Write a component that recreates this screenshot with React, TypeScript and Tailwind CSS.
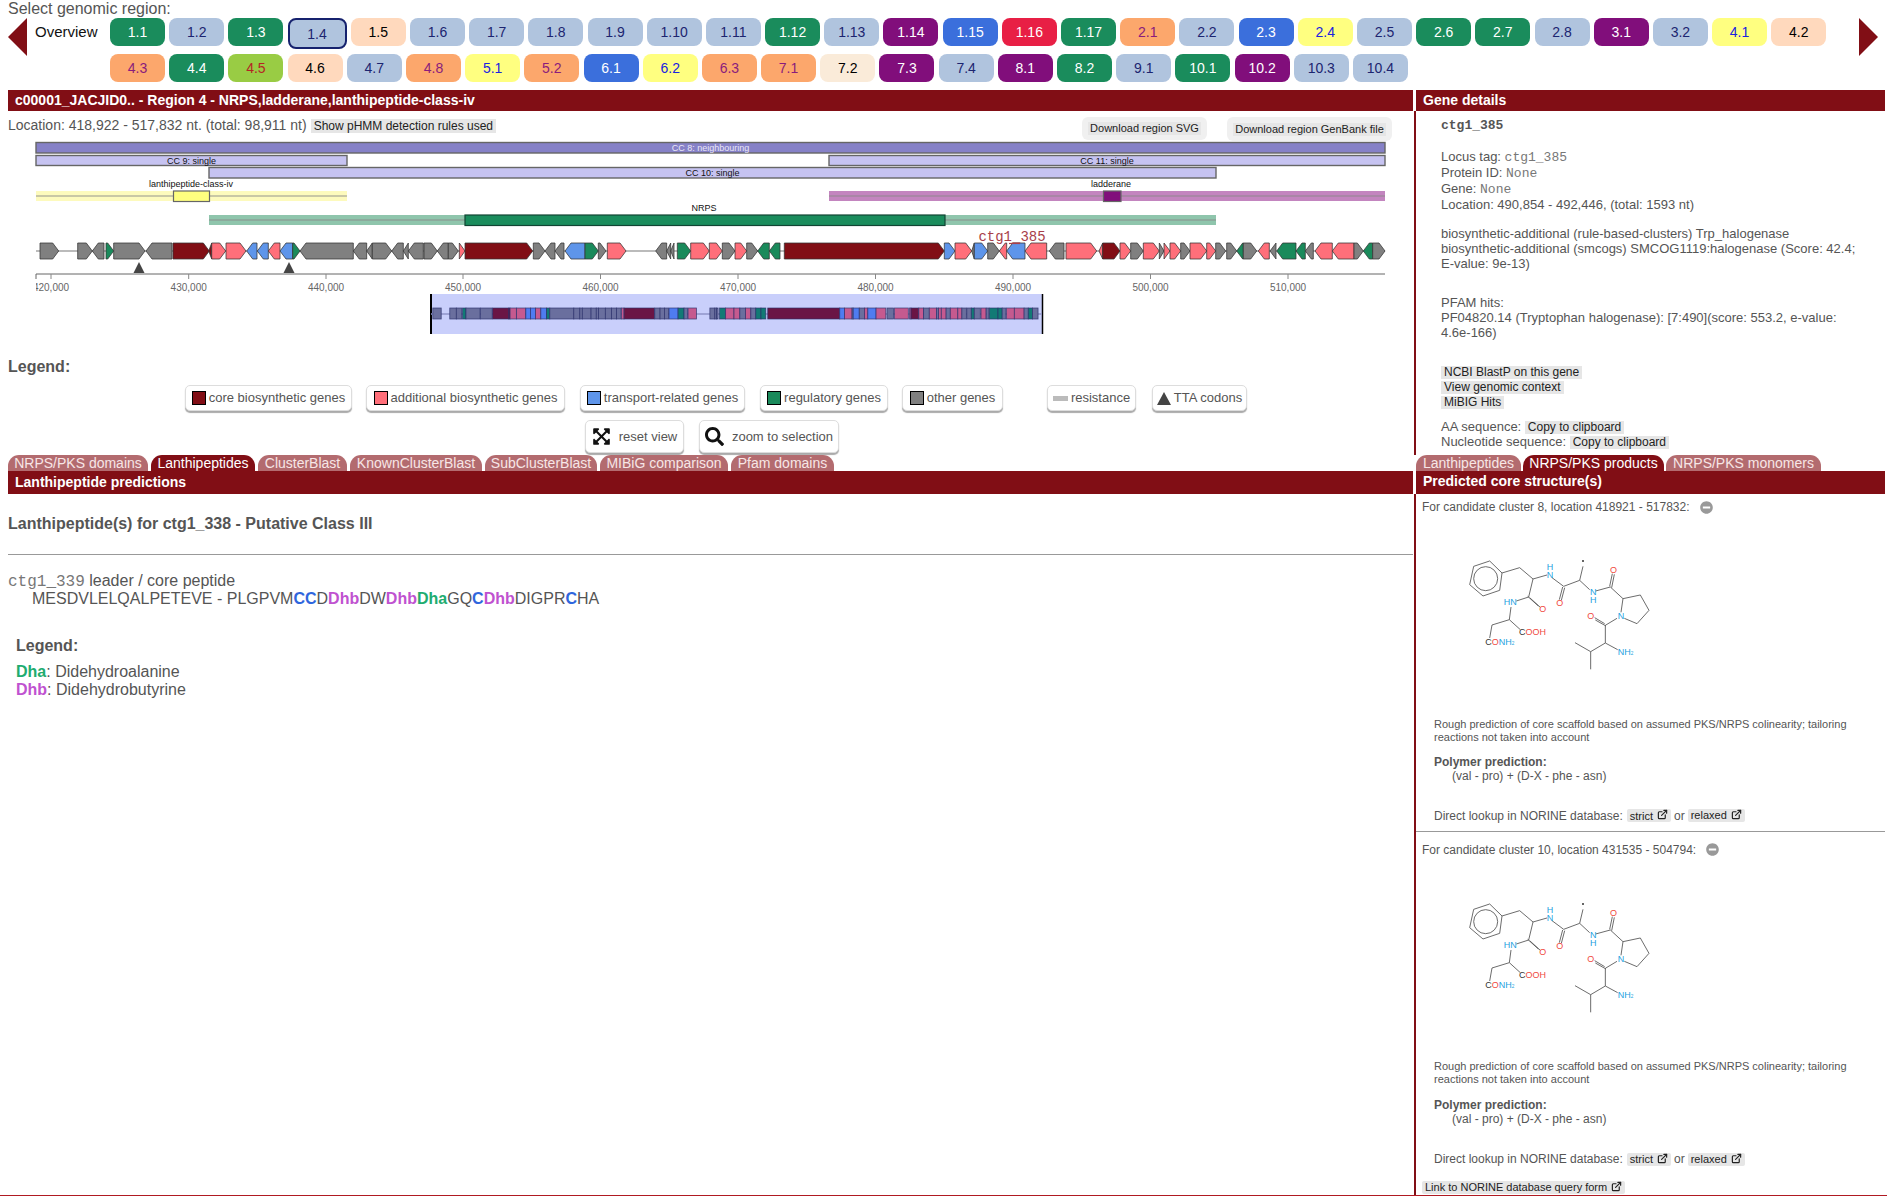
import type { ReactNode } from "react";
import { ExternalLink } from "lucide-react";
import { FaExpandArrowsAlt, FaMinusCircle, FaSearch } from "react-icons/fa";

const RED = "#810e15";

const btnStyles: Record<string, string> = {
  g: "bg-[#1a8c5c] text-white",
  l: "bg-[#b0c4de] text-[#1c2570]",
  p: "bg-[#ffd9bd] text-black",
  u: "bg-[#810e7b] text-white",
  b: "bg-[#3b6fdc] text-white",
  r: "bg-[#e81f45] text-white",
  o: "bg-[#fca76c] text-[#8a1c7c]",
  y: "bg-[#ffff80] text-[#1a22e0]",
  m: "bg-[#99cc44] text-[#b52424]",
  c: "bg-[#faebd9] text-black",
};

const regions: [string, string][] = [
  ["1.1", "g"], ["1.2", "l"], ["1.3", "g"], ["1.4", "l"], ["1.5", "p"], ["1.6", "l"], ["1.7", "l"], ["1.8", "l"],
  ["1.9", "l"], ["1.10", "l"], ["1.11", "l"], ["1.12", "g"], ["1.13", "l"], ["1.14", "u"], ["1.15", "b"], ["1.16", "r"],
  ["1.17", "g"], ["2.1", "o"], ["2.2", "l"], ["2.3", "b"], ["2.4", "y"], ["2.5", "l"], ["2.6", "g"], ["2.7", "g"],
  ["2.8", "l"], ["3.1", "u"], ["3.2", "l"], ["4.1", "y"], ["4.2", "p"],
  ["4.3", "o"], ["4.4", "g"], ["4.5", "m"], ["4.6", "p"], ["4.7", "l"], ["4.8", "o"], ["5.1", "y"], ["5.2", "o"],
  ["6.1", "b"], ["6.2", "y"], ["6.3", "o"], ["7.1", "o"], ["7.2", "c"], ["7.3", "u"], ["7.4", "l"], ["8.1", "u"],
  ["8.2", "g"], ["9.1", "l"], ["10.1", "g"], ["10.2", "u"], ["10.3", "l"], ["10.4", "l"],
];

const geneFill: Record<string, string> = {
  g: "#808080",
  c: "#810e15",
  a: "#ff6f7a",
  t: "#5e95ea",
  r: "#1a8a5b",
};

const miniFill: Record<string, string> = {
  g: "#6a6f9e",
  c: "#6a1545",
  a: "#c55a8f",
  t: "#4f7cf0",
  r: "#127a75",
};

// start, end, direction (1 forward, 0 reverse), kind
const genes: [number, number, number, string][] = [
  [40, 58.7, 1, "g"], [77.7, 92.3, 1, "g"], [92.3, 104, 0, "g"], [106, 113.7, 1, "r"], [113.7, 145, 1, "g"],
  [146, 172, 0, "g"], [173, 209.3, 1, "c"], [208.7, 211.7, 0, "c"], [211.7, 225.7, 1, "a"], [226, 246, 1, "a"],
  [246.7, 257, 0, "t"], [257.3, 268.3, 0, "t"], [268.3, 280, 0, "a"], [280, 292.7, 0, "t"], [292.7, 300, 1, "r"],
  [300, 353.3, 0, "g"], [353.3, 366.7, 0, "g"], [366.7, 372.3, 0, "g"], [372.3, 391.7, 1, "g"], [391.7, 403.3, 0, "g"],
  [403.3, 408.3, 0, "g"], [408.3, 423.3, 0, "g"], [424, 437.3, 1, "g"], [437.3, 448.3, 0, "g"], [448.3, 458.3, 1, "g"],
  [459.3, 465, 1, "a"], [465, 532.7, 1, "c"], [533.3, 545, 1, "g"], [545, 555, 0, "g"], [555, 564, 0, "g"],
  [565, 585, 0, "t"], [585, 598.3, 1, "r"], [598.3, 606, 1, "g"], [607.3, 626, 1, "a"], [655.7, 666.7, 0, "g"],
  [666.7, 670.7, 0, "g"], [670.7, 674, 0, "g"], [677.3, 690.7, 1, "r"], [690.7, 709.3, 1, "a"], [709.3, 722.3, 1, "a"],
  [722.3, 735, 1, "g"], [735, 746.7, 1, "a"], [746.7, 757.7, 1, "g"], [757.7, 769.3, 0, "r"], [769.3, 780, 0, "r"],
  [784.3, 944.3, 1, "c"], [944.3, 955, 1, "t"], [955, 971.7, 1, "a"], [971.7, 974.3, 0, "g"], [974.3, 987.7, 1, "t"],
  [987.7, 999.3, 1, "g"], [999.3, 1006.7, 0, "a"], [1006.7, 1025, 0, "t"], [1025, 1046.7, 0, "a"], [1049.3, 1064, 0, "g"],
  [1066, 1096.7, 1, "a"], [1099, 1102.7, 0, "a"], [1102.7, 1120, 1, "c"], [1120, 1130.7, 1, "a"], [1130.7, 1143.3, 1, "g"],
  [1143.3, 1159.3, 1, "a"], [1159.3, 1164, 1, "g"], [1164, 1170, 1, "a"], [1170, 1180.7, 1, "a"], [1180.7, 1190, 1, "g"],
  [1190, 1206.7, 1, "a"], [1206.7, 1215.7, 1, "a"], [1215.7, 1225.7, 1, "g"], [1226.7, 1236.7, 1, "g"], [1236.7, 1243.3, 0, "r"],
  [1243.3, 1256.7, 1, "g"], [1258.3, 1269.3, 0, "a"], [1270, 1276, 0, "g"], [1276.7, 1296, 0, "r"], [1296, 1305.3, 0, "r"],
  [1305.3, 1313.3, 0, "g"], [1315, 1332.3, 0, "a"], [1332.3, 1354, 0, "a"], [1354, 1363.3, 1, "g"], [1363.3, 1372.7, 0, "r"],
  [1372.7, 1385, 1, "g"],
];

const ticks = [
  [51, "420,000"], [188.7, "430,000"], [326, "440,000"], [463, "450,000"], [600.5, "460,000"], [738, "470,000"],
  [875.5, "480,000"], [1013, "490,000"], [1150.5, "500,000"], [1288, "510,000"],
] as const;

function genePoints(s: number, e: number, fwd: number) {
  const t = Math.min(6, e - s);
  if (fwd) return `${s},243 ${e - t},243 ${e},251 ${e - t},259 ${s},259`;
  return `${e},243 ${s + t},243 ${s},251 ${s + t},259 ${e},259`;
}

function CandidateBar({ x1, x2, y, h, fill, stroke, label, color = "#111" }: { x1: number; x2: number; y: number; h: number; fill: string; stroke: string; label: string; color?: string }) {
  return (
    <g>
      <rect x={x1} y={y} width={x2 - x1} height={h} fill={fill} stroke={stroke} strokeWidth="1.4" />
      <text x={(x1 + x2) / 2} y={y + h - 2} fontSize="9" textAnchor="middle" fill={color}>{label}</text>
    </g>
  );
}

function ProtoBar({ x1, x2, cx1, cx2, y, fill, core, label, labelX, coreStroke = "#666" }: { x1: number; x2: number; cx1: number; cx2: number; y: number; fill: string; core: string; label: string; labelX: number; coreStroke?: string }) {
  return (
    <g>
      <rect x={x1} y={y} width={x2 - x1} height="10" fill={fill} />
      <line x1={x1} x2={x2} y1={y + 5} y2={y + 5} stroke="#888" strokeOpacity="0.6" strokeWidth="1.5" />
      <rect x={cx1} y={y} width={cx2 - cx1} height="10.5" fill={core} stroke={coreStroke} strokeWidth="1.2" />
      <text x={labelX} y={y - 4} fontSize="9" textAnchor="middle" fill="#111">{label}</text>
    </g>
  );
}

function RegionView() {
  return (
    <svg viewBox="8 141 1405 199" width="1405" height="199" className="block">
      <defs>
        <clipPath id="axisClip">
          <rect x="36" y="270" width="1349" height="30" />
        </clipPath>
      </defs>
      <CandidateBar x1={36} x2={1385} y={142.5} h={10.5} fill="#8681c7" stroke="#666" label="CC 8: neighbouring" color="#e8e6f8" />
      <CandidateBar x1={36} x2={347} y={155.5} h={10} fill="#c6c3f1" stroke="#666" label="CC 9: single" />
      <CandidateBar x1={829} x2={1385} y={155.5} h={10} fill="#c6c3f1" stroke="#666" label="CC 11: single" />
      <CandidateBar x1={209} x2={1216} y={167.5} h={10.5} fill="#c6c3f1" stroke="#666" label="CC 10: single" />
      <ProtoBar x1={36} x2={347} cx1={173.5} cx2={209.5} y={191} fill="#fdfabd" core="#ffff7f" label="lanthipeptide-class-iv" labelX={191} />
      <ProtoBar x1={829} x2={1385} cx1={1103.5} cx2={1121} y={191} fill="#c385bf" core="#810e7b" label="ladderane" labelX={1111} />
      <ProtoBar x1={209} x2={1216} cx1={465} cx2={945} y={215} fill="#8fc5ac" core="#1a8c5c" coreStroke="#143" label="NRPS" labelX={704} />

      <line x1={36} x2={1385} y1={251} y2={251} stroke="#bbb" strokeWidth="2" />
      {genes.map(([s, e, d, k]) => (
        <polygon key={s} points={genePoints(s, e, d)} fill={geneFill[k]} stroke="#333" strokeOpacity="0.75" strokeWidth="1" />
      ))}
      <text x={1012} y={241} fontSize="14" textAnchor="middle" fill="#a8404a" fontFamily="'Liberation Mono', monospace">ctg1_385</text>
      <line x1={1009} x2={1020} y1={243.5} y2={243.5} stroke="#a8404a" strokeWidth="1.2" />

      <polygon points="139,262 133.5,273 144.5,273" fill="#444" />
      <polygon points="289,262 283.5,273 294.5,273" fill="#444" />

      <line x1={36} x2={1385} y1={274} y2={274} stroke="#666" strokeWidth="1" />
      <line x1={36} x2={36} y1={274} y2={279} stroke="#666" />
      {ticks.map(([x, label]) => (
        <g key={label}>
          <line x1={x} x2={x} y1={274} y2={279} stroke="#888" />
          <text x={x} y={291} fontSize="10" textAnchor="middle" fill="#666" clipPath="url(#axisClip)">{label}</text>
        </g>
      ))}

      <rect x={430} y={294} width={613} height={40} fill="#c9cffb" />
      <line x1={431} x2={431} y1={294} y2={334} stroke="#000" strokeWidth="2" />
      <line x1={1042.5} x2={1042.5} y1={294} y2={334} stroke="#000" strokeWidth="1.5" />
      <line x1={431} x2={1042} y1={314} y2={314} stroke="#8f94c8" strokeWidth="1.5" />
      {genes.map(([s, e, , k]) => (
        <rect key={s} x={431 + (s - 36) * 0.45} y={308} width={(e - s) * 0.45} height={11} fill={miniFill[k]} stroke="#2a2f6a" strokeOpacity="0.8" strokeWidth="0.8" />
      ))}
    </svg>
  );
}

function Molecule() {
  const bonds = [
    "M275 248L328 232L368 266L410 254", "M425 262L460 288L508 270L538 298", "M508 270L518 228", "M556 302L600 290L638 325L690 314L716 360L680 400L642 384",
    "M638 325L632 366", "M620 384L585 405L585 458L622 478", "M585 458L541 484L494 457", "M541 484L541 537",
    "M368 266L355 320L318 332", "M302 350L297 388L245 404L238 443", "M297 388L330 418",
    "M457 290L447 328", "M463 292L453 330", "M598 288L606 250", "M604 292L612 252", "M583 400L553 382", "M587 407L555 389", "M352 318L384 347", "M358 322L390 351",
  ];
  return (
    <svg viewBox="170 200 570 350" width="190" height="116.67" className="block">
      <polygon points="178,283 190,228 238,212 275,248 268,300 218,317" fill="none" stroke="#555" strokeWidth="2.6" />
      <circle cx="226" cy="265" r="36" fill="none" stroke="#555" strokeWidth="2.6" />
      {bonds.map((d) => (
        <path key={d} d={d} fill="none" stroke="#555" strokeWidth="2.6" />
      ))}
      <circle cx="518" cy="212" r="3" fill="#333" />
      <g fontSize="27" fill="#1da1e0">
        <text x="409" y="238">H</text>
        <text x="409" y="262">N</text>
        <text x="539" y="313">N</text>
        <text x="539" y="337">H</text>
        <text x="622" y="387">N</text>
        <text x="280" y="345">HN</text>
        <text x="622" y="494">NH<tspan fontSize="14">2</tspan></text>
      </g>
      <g fontSize="27" fill="#f04a3e">
        <text x="599" y="248">O</text>
        <text x="438" y="347">O</text>
        <text x="387" y="364">O</text>
        <text x="531" y="387">O</text>
      </g>
      <text x="326" y="433" fontSize="27" fill="#f04a3e"><tspan fill="#333">C</tspan>OOH</text>
      <text x="225" y="465" fontSize="27" fill="#1da1e0"><tspan fill="#333">C</tspan><tspan fill="#f04a3e">O</tspan>NH<tspan fontSize="14">2</tspan></text>
    </svg>
  );
}

function LinkChip({ label }: { label: string }) {
  return (
    <span className="inline-flex items-center h-[13px] px-[3px] bg-[#e6e6e6] rounded-[2px] text-[11px] text-[#222]">
      {label}
      <ExternalLink size={11} strokeWidth={2.6} className="ml-[4px] -mt-[2px] text-[#222]" />
    </span>
  );
}

function PredictionBlock({ label, top, polyMt }: { label: string; top: string; polyMt: string }) {
  return (
    <div className={top}>
      <div className="flex items-center h-[14px] ml-[6px] text-[12px] leading-[14px]">
        {label}
        <FaMinusCircle size={13} className="ml-[10px] text-[#999]" />
      </div>
      <div className="mt-[43px] ml-[51px]">
        <Molecule />
      </div>
      <p className="mt-[44px] ml-[18px] w-[430px] text-[11px] leading-[13px]">
        Rough prediction of core scaffold based on assumed PKS/NRPS colinearity; tailoring reactions not taken into account
      </p>
      <div className={`${polyMt} ml-[18px] text-[12px] leading-[14px] font-bold`}>Polymer prediction:</div>
      <div className="ml-[36px] text-[12px] leading-[14px]">(val - pro) + (D-X - phe - asn)</div>
      <div className="mt-[26px] ml-[18px] flex items-center h-[14px] text-[12px]">
        Direct lookup in NORINE database:
        <span className="ml-[4px]"><LinkChip label="strict" /></span>
        <span className="mx-[3px]">or</span>
        <LinkChip label="relaxed" />
      </div>
    </div>
  );
}

const mono = "font-['Liberation_Mono',monospace] text-[#777]";

function Chip({ children }: { children: ReactNode }) {
  return <span className="inline-block bg-[#e6e6e6] px-[3px] text-[12px] leading-[13px] text-[#222]">{children}</span>;
}

const leftTabs = [
  ["NRPS/PKS domains", "w-[140px]"],
  ["Lanthipeptides", "w-[104px]"],
  ["ClusterBlast", "w-[89px]"],
  ["KnownClusterBlast", "w-[132px]"],
  ["SubClusterBlast", "w-[112px]"],
  ["MIBiG comparison", "w-[128px]"],
  ["Pfam domains", "w-[103px]"],
];

const legend = [
  ["core biosynthetic genes", "#810e15", "w-[167px]", "ml-[177px]"],
  ["additional biosynthetic genes", "#ff6f7a", "w-[199px]", "ml-[14px]"],
  ["transport-related genes", "#5e95ea", "w-[165px]", "ml-[15px]"],
  ["regulatory genes", "#1a8a5b", "w-[128px]", "ml-[15px]"],
  ["other genes", "#808080", "w-[101px]", "ml-[14px]"],
];

const legendBtn = "flex items-center justify-center bg-white border border-[#ddd] rounded-[5px] shadow-[0_2px_1px_#aaa] text-[13px] text-[#555]";

function Tab({ label, active, width }: { label: string; active?: boolean; width: string }) {
  return (
    <div className={`${width} h-[16px] rounded-t-[11px] text-center text-[14px] leading-[16px] ${active ? "bg-[#810e15] text-white" : "bg-[#b36b6f] text-[#f7e6e6]"}`}>
      {label}
    </div>
  );
}

function Peptide() {
  const blue = "font-bold text-[#2f66dd]";
  const purple = "font-bold text-[#bf52d0]";
  const green = "font-bold text-[#20ac70]";
  return (
    <div className="ml-[24px] text-[16px] leading-[18px]">
      MESDVLELQALPETEVE - PLGPVM<span className={blue}>CC</span>D<span className={purple}>Dhb</span>DW<span className={purple}>Dhb</span>
      <span className={green}>Dha</span>GQ<span className={blue}>C</span><span className={purple}>Dhb</span>DIGPR<span className={blue}>C</span>HA
    </div>
  );
}

export default function App() {
  return (
    <div className="w-[1887px] h-[1198px] overflow-hidden bg-white text-[#555] font-['Liberation_Sans',Arial,sans-serif]">
      {/* Region selector */}
      <div className="h-[90px]">
        <div className="ml-[8px] h-[18px] text-[16px] leading-[18px]">Select genomic region:</div>
        <div className="flex items-start">
          <svg width="19" height="38" className="ml-[8px] shrink-0" viewBox="0 0 19 38">
            <polygon points="19,0 19,38 0,19" fill={RED} />
          </svg>
          <div className="ml-[8px] w-[75px] text-[15px] leading-[28px] text-[#111]">Overview</div>
          <div className="flex flex-wrap items-start w-[1720px] gap-x-[4.2px] gap-y-[8px]">
            {regions.map(([name, kind]) => (
              <div
                key={name}
                className={`rounded-[8px] flex items-center justify-center text-[14px] ${btnStyles[kind]} ${name === "1.4" ? "w-[59px] h-[31px] -mb-[3px] border-2 border-[#16226e] pt-[2px]" : "w-[55px] h-[28px]"}`}
              >
                {name}
              </div>
            ))}
          </div>
          <svg width="19" height="38" className="ml-[29px] shrink-0" viewBox="0 0 19 38">
            <polygon points="0,0 0,38 19,19" fill={RED} />
          </svg>
        </div>
      </div>

      <div className="flex h-[1105px] border-b border-[#b01a22] box-content">
        {/* Left column */}
        <div className="ml-[8px] w-[1405px]">
          <div className="h-[21px] bg-[#810e15] pl-[7px] text-[14px] leading-[21px] font-bold text-white">
            c00001_JACJID0.. - Region 4 - NRPS,ladderane,lanthipeptide-class-iv
          </div>
          <div className="flex h-[30px] text-[14px]">
            <div className="mt-[6px] leading-[16px]">Location: 418,922 - 517,832 nt. (total: 98,911 nt)</div>
            <div className="mt-[8px] ml-[4px] h-[14px] bg-[#e6e6e6] px-[3px] text-[12px] leading-[14px] text-[#222]">Show pHMM detection rules used</div>
            <div className="ml-auto mt-[6px] flex h-[23px] w-[125px] items-center justify-center rounded-[6px] bg-[#f0f0f0] text-[11px] text-[#222]">
              <span className="bg-[#e6e6e6] px-[2px] leading-[13px]">Download region SVG</span>
            </div>
            <div className="ml-[20px] mr-[21px] mt-[6px] flex h-[24px] w-[165px] items-center justify-center rounded-[6px] bg-[#f0f0f0] text-[11px] text-[#222]">
              <span className="bg-[#e6e6e6] px-[2px] leading-[13px]">Download region GenBank file</span>
            </div>
          </div>
          <RegionView />

          <div className="mt-[17px] text-[16px] leading-[20px] font-bold">Legend:</div>
          <div className="mt-[8px] flex h-[26px]">
            {legend.map(([label, color, width, ml]) => (
              <div key={label} className={`${legendBtn} ${width} ${ml}`}>
                <span className="mr-[3px] size-[14px] border border-black" style={{ background: color }} />
                {label}
              </div>
            ))}
            <div className={`${legendBtn} ml-[44px] w-[89px]`}>
              <span className="mr-[3px] h-[5px] w-[15px] bg-[#bbb]" />
              resistance
            </div>
            <div className={`${legendBtn} ml-[16px] w-[95px]`}>
              <svg width="14" height="13" viewBox="0 0 14 13" className="mr-[3px]"><polygon points="7,0 14,13 0,13" fill="#444" /></svg>
              TTA codons
            </div>
          </div>
          <div className="mt-[9px] flex h-[33px]">
            <div className={`${legendBtn} ml-[577px] w-[99px]`}>
              <FaExpandArrowsAlt size={19} className="mr-[8px] text-[#111]" />
              reset view
            </div>
            <div className={`${legendBtn} ml-[15px] w-[140px]`}>
              <FaSearch size={19} className="mr-[8px] text-[#111]" />
              zoom to selection
            </div>
          </div>

          <div className="mt-[2px] flex gap-[3px]">
            {leftTabs.map(([label, width]) => (
              <Tab key={label} label={label} width={width} active={label === "Lanthipeptides"} />
            ))}
          </div>
          <div className="h-[23px] bg-[#810e15] pl-[7px] text-[14px] leading-[22px] font-bold text-white">Lanthipeptide predictions</div>

          <div className="mt-[21px] text-[16px] leading-[18px] font-bold">Lanthipeptide(s) for ctg1_338 - Putative Class III</div>
          <div className="mt-[21px] border-t border-[#999]" />
          <div className="mt-[17px] h-[18px] text-[16px] leading-[18px]">
            <span className={mono}>ctg1_339</span> leader / core peptide
          </div>
          <Peptide />
          <div className="mt-[29px] ml-[8px] text-[16px] leading-[18px] font-bold">Legend:</div>
          <div className="mt-[8px] ml-[8px] text-[16px] leading-[18px]">
            <div><span className="font-bold text-[#20ac70]">Dha</span>: Didehydroalanine</div>
            <div><span className="font-bold text-[#bf52d0]">Dhb</span>: Didehydrobutyrine</div>
          </div>
        </div>

        {/* Right column */}
        <div className="ml-[1px] w-[471px]">
          <div className="ml-[2px] h-[21px] bg-[#810e15] pl-[7px] text-[14px] leading-[21px] font-bold text-white">Gene details</div>
          <div className="h-[344px] border-l-2 border-[#810e15] pl-[25px] text-[13px]">
            <div className="pt-[7px] font-['Liberation_Mono',monospace] text-[13px] leading-[15px] font-bold">ctg1_385</div>
            <div className="mt-[16px] leading-[16px]">
              <div className="h-[16px]">Locus tag: <span className={mono}>ctg1_385</span></div>
              <div className="h-[16px]">Protein ID: <span className={mono}>None</span></div>
              <div className="h-[16px]">Gene: <span className={mono}>None</span></div>
              <div className="h-[16px]">Location: 490,854 - 492,446, (total: 1593 nt)</div>
            </div>
            <div className="mt-[13px] w-[430px] leading-[15px]">
              biosynthetic-additional (rule-based-clusters) Trp_halogenase<br />
              biosynthetic-additional (smcogs) SMCOG1119:halogenase (Score: 42.4; E-value: 9e-13)
            </div>
            <div className="mt-[24px] w-[430px] leading-[15px]">
              PFAM hits:<br />
              PF04820.14 (Tryptophan halogenase): [7:490](score: 553.2, e-value:<br />
              4.6e-166)
            </div>
            <div className="mt-[26px] flex flex-col items-start gap-[2px]">
              <Chip>NCBI BlastP on this gene</Chip>
              <Chip>View genomic context</Chip>
              <Chip>MiBIG Hits</Chip>
            </div>
            <div className="mt-[10px] leading-[15px]">
              <div className="h-[15px]">AA sequence: <Chip>Copy to clipboard</Chip></div>
              <div className="h-[15px]">Nucleotide sequence: <Chip>Copy to clipboard</Chip></div>
            </div>
          </div>
          <div className="ml-[2px] flex gap-[2px]">
            <Tab label="Lanthipeptides" width="w-[105px]" />
            <Tab label="NRPS/PKS products" active width="w-[141px]" />
            <Tab label="NRPS/PKS monomers" width="w-[155px]" />
          </div>
          <div className="ml-[2px] h-[23px] bg-[#810e15] pl-[7px] text-[14px] leading-[21px] font-bold text-white">Predicted core structure(s)</div>
          <div className="h-[701px] border-l-2 border-[#810e15]">
            <PredictionBlock label="For candidate cluster 8, location 418921 - 517832:" top="pt-[6px]" polyMt="mt-[11px]" />
            <div className="mt-[8px] border-t border-[#999]" />
            <PredictionBlock label="For candidate cluster 10, location 431535 - 504794:" top="pt-[11px]" polyMt="mt-[12px]" />
            <div className="mt-[8px] ml-[6px]">
              <LinkChip label="Link to NORINE database query form" />
            </div>
          </div>
        </div>
      </div>
    </div>
  );
}
